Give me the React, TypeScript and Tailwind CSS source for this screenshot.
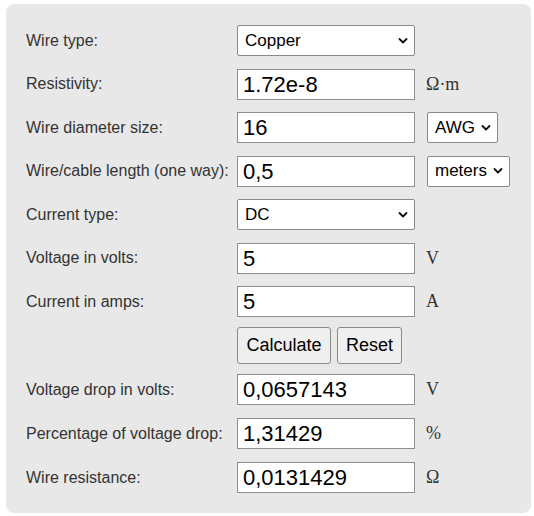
import { ReactNode } from 'react';

// ============================================
// Voltage drop calculator form
// ============================================

const Chevron = () => (
  <svg width="10" height="7" viewBox="0 0 10 7" className="pointer-events-none absolute right-[7px] top-1/2 -translate-y-1/2">
    <path d="M1.5 1.5 L5 5 L8.5 1.5" fill="none" stroke="#111" strokeWidth="1.8" strokeLinecap="round" strokeLinejoin="round" />
  </svg>
);

interface SelectProps {
  value: string;
  options: string[];
  className?: string;
}

const Select = ({ value, options, className = '' }: SelectProps) => (
  <div className={`relative h-[31px] ${className}`}>
    <select
      defaultValue={value}
      className="h-full w-full appearance-none rounded-[2px] border border-[#8a8a8a] bg-white pl-[7px] pr-[16px] text-[17px] text-black outline-none"
    >
      {options.map((o) => (
        <option key={o}>{o}</option>
      ))}
    </select>
    <Chevron />
  </div>
);

const Input = ({ value }: { value: string }) => (
  <input
    defaultValue={value}
    className="h-[31px] w-[178px] border border-[#8f8f8f] bg-white px-[5px] text-[22px] text-black outline-none"
  />
);

const Unit = ({ children }: { children: ReactNode }) => (
  <span className="ml-[11px] font-['Liberation_Serif',serif] text-[18px] text-[#333]">{children}</span>
);

interface RowProps {
  label?: string;
  children: ReactNode;
  className?: string;
}

const Row = ({ label, children, className = '' }: RowProps) => (
  <div className={`flex items-center ${className}`}>
    <div className="w-[211px] shrink-0 text-[16px] text-[#333]">{label}</div>
    {children}
  </div>
);

export default function App() {
  return (
    <div className="min-h-[516px] bg-white pl-[6px] pt-[4px] font-['Liberation_Sans',Arial,sans-serif]">
      <div className="h-[509px] w-[525px] rounded-lg bg-[#e8e8e8] pl-[20px] pt-[21px]">
        <div className="flex flex-col gap-[12.5px]">
          <Row label="Wire type:">
            <Select value="Copper" options={['Copper', 'Aluminum']} className="w-[178px]" />
          </Row>
          <Row label="Resistivity:">
            <Input value="1.72e-8" />
            <Unit>Ω·m</Unit>
          </Row>
          <Row label="Wire diameter size:">
            <Input value="16" />
            <Select value="AWG" options={['AWG', 'mm']} className="ml-[12px] w-[71px]" />
          </Row>
          <Row label="Wire/cable length (one way):">
            <Input value="0,5" />
            <Select value="meters" options={['meters', 'feet']} className="ml-[12px] w-[83px]" />
          </Row>
          <Row label="Current type:">
            <Select value="DC" options={['DC', 'AC single phase', 'AC three phase']} className="w-[178px]" />
          </Row>
          <Row label="Voltage in volts:">
            <Input value="5" />
            <Unit>V</Unit>
          </Row>
          <Row label="Current in amps:">
            <Input value="5" />
            <Unit>A</Unit>
          </Row>
        </div>

        <Row className="mt-[10px]">
          <div className="flex gap-[6px]">
            <button className="h-[37px] w-[94px] rounded-[3px] border border-[#8a8a8a] bg-[#efefef] text-[18px] text-black">
              Calculate
            </button>
            <button className="h-[37px] w-[65px] rounded-[3px] border border-[#8a8a8a] bg-[#efefef] text-[18px] text-black">
              Reset
            </button>
          </div>
        </Row>

        <div className="mt-[10px] flex flex-col gap-[13px]">
          <Row label="Voltage drop in volts:">
            <Input value="0,0657143" />
            <Unit>V</Unit>
          </Row>
          <Row label="Percentage of voltage drop:">
            <Input value="1,31429" />
            <Unit>%</Unit>
          </Row>
          <Row label="Wire resistance:">
            <Input value="0,0131429" />
            <Unit>Ω</Unit>
          </Row>
        </div>
      </div>
    </div>
  );
}
